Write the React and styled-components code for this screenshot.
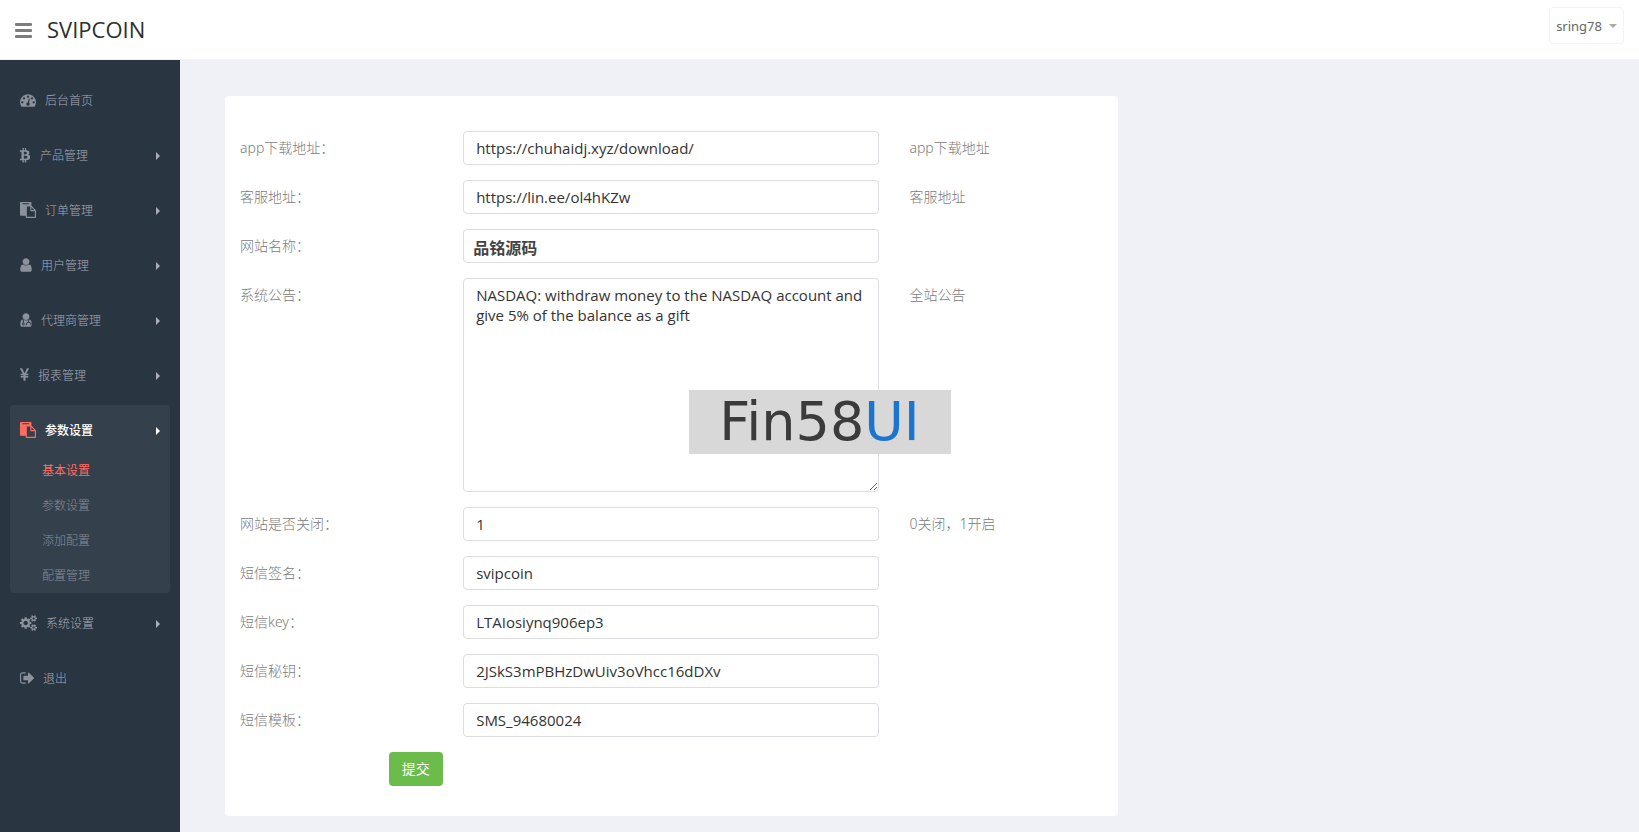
import React, { useState } from 'react'
import styled, { createGlobalStyle } from 'styled-components'

const colors = {
  page: '#eff1f7',
  sidebar: '#2a3542',
  sidebarActive: '#35404d',
  menuIcon: '#8b929c',
  menuText: '#a4aab4',
  subText: '#868d98',
  accent: '#ff6c60',
  label: '#7c7c7c',
  input: '#333',
  border: '#dcdde0',
  green: '#6cbc4b',
}

const GlobalStyle = createGlobalStyle`
  * {
    box-sizing: border-box;
  }

  body {
    margin: 0;
    background: ${colors.page};
    color: ${colors.label};
    font-family: "Noto Sans", "Noto Sans CJK SC", sans-serif;
    font-size: 14px;
    line-height: 20px;
  }

  button,
  input,
  textarea {
    font-family: inherit;
  }
`

const This = styled.div`
  display: flex;
  flex-direction: column;
  min-height: 100vh;
`

const Header = styled.header`
  display: flex;
  flex-direction: row;
  align-items: flex-start;
  justify-content: space-between;

  height: 60px;
  padding: 7px 15px;

  background: #fff;
  border-bottom: 1px solid #f1f2f7;
`

const Brand = styled.div`
  display: flex;
  flex-direction: row;
  align-items: center;
  gap: 15px;

  height: 46px;
`

const MenuButton = styled.button`
  display: flex;
  flex-direction: column;
  gap: 3px;

  width: 17px;
  padding: 0;

  background: none;
  border: 0;
  cursor: pointer;
`

const Bar = styled.span`
  width: 100%;
  height: 3px;

  background: #7d7d7d;
  border-radius: 1px;
`

const Title = styled.a`
  padding-bottom: 2px;

  color: #2e2e2e;
  font-family: "Open Sans", sans-serif;
  font-size: 22px;
  line-height: 30px;
  text-decoration: none;
`

const UserButton = styled.button`
  display: flex;
  flex-direction: row;
  align-items: center;
  gap: 7px;

  height: 37px;
  padding: 0 6px;

  background: #fff;
  border: 1px solid #f3f3f5;
  border-radius: 4px;
  color: #666;
  cursor: pointer;
  font-size: 13px;
`

const DownCaret = styled.span`
  border-top: 4px solid #aaa;
  border-left: 4px solid transparent;
  border-right: 4px solid transparent;
`

const Body = styled.div`
  flex-grow: 1;

  display: flex;
  flex-direction: row;
`

const Sidebar = styled.nav`
  flex-shrink: 0;

  width: 180px;
  padding: 15px 10px;

  background: ${colors.sidebar};
`

const Menu = styled.ul`
  display: flex;
  flex-direction: column;
  gap: 5px;

  margin: 0;
  padding: 0;

  list-style: none;
`

const MenuItem = styled.li`
  background: ${props => props.$active ? colors.sidebarActive : 'transparent'};
  border-radius: 4px;
`

const MenuLink = styled.a`
  display: flex;
  flex-direction: row;
  align-items: center;
  gap: 9px;

  height: ${props => props.$active ? '48px' : '50px'};
  padding: ${props => props.$active ? '4px' : '2px'} 10px 0;

  color: ${props => props.$active ? '#fff' : colors.menuText};
  font-size: 12px;
  font-weight: ${props => props.$active ? 500 : 300};
  text-decoration: none;

  svg {
    flex-shrink: 0;
    overflow: visible;
    color: ${props => props.$active ? colors.accent : colors.menuIcon};
  }
`

const RightCaret = styled.span`
  margin-left: auto;

  border-left: 4px solid ${props => props.$active ? '#fff' : '#a9aeb8'};
  border-top: 4px solid transparent;
  border-bottom: 4px solid transparent;
`

const SubMenu = styled.ul`
  margin: 0;
  padding: 0;

  list-style: none;
`

const SubLink = styled.a`
  display: block;

  padding-left: 32px;

  color: ${props => props.$active ? colors.accent : colors.subText};
  font-size: 12px;
  font-weight: ${props => props.$active ? 400 : 300};
  line-height: 35px;
  text-decoration: none;
`

const Main = styled.main`
  flex-grow: 1;

  padding: 36px 45px 16px 30px;
`

const Column = styled.div`
  width: calc(100% * 2 / 3);
  padding: 0 15px;
`

const Form = styled.form`
  display: flex;
  flex-direction: column;
  gap: 15px;

  padding: 35px 0 30px;

  background: #fff;
  border-radius: 4px;
`

const Row = styled.div`
  display: grid;
  grid-template-columns: 3fr 6fr 3fr;
`

const Cell = styled.div`
  display: flex;
  min-width: 0;
  padding: 0 15px;
`

const Label = styled.label`
  padding-top: 7px;

  font-weight: 300;
`

const Hint = styled.span`
  padding-top: 7px;

  font-weight: 300;
`

const Input = styled.input`
  width: 100%;
  height: 34px;
  padding: ${props => props.$strong ? '2px 9px 0' : '0 12px'};

  background: #fff;
  border: 1px solid ${colors.border};
  border-radius: 4px;
  color: ${props => props.$strong ? '#444' : colors.input};
  font-family: "Open Sans", "Noto Sans CJK SC", sans-serif;
  font-size: ${props => props.$strong ? '16px' : '15px'};
  font-weight: ${props => props.$strong ? 700 : 400};
  outline: none;
`

const TextArea = styled.textarea`
  width: 100%;
  height: 214px;
  padding: 6px 12px;

  background: #fff;
  border: 1px solid ${colors.border};
  border-radius: 4px;
  color: ${colors.input};
  font-family: "Open Sans", "Noto Sans CJK SC", sans-serif;
  font-size: 15px;
  line-height: 20px;
  outline: none;
  resize: vertical;
`

const Actions = styled.div`
  margin-left: calc(100% / 6);
  padding: 0 15px;
`

const Submit = styled.button`
  display: block;

  height: 34px;
  padding: 0 13px 2px;

  background: ${colors.green};
  border: 0;
  border-radius: 4px;
  color: #fff;
  cursor: pointer;
  font-size: 14px;
`

const Watermark = styled.div`
  position: fixed;
  top: calc(50% - 26px);
  left: calc(50% - 131px);

  display: flex;
  align-items: center;
  justify-content: center;
  width: 262px;
  height: 64px;

  background: #d8d8d8;
  color: #3b3b3b;
  font-family: "DejaVu Sans", sans-serif;
  font-size: 54px;
  line-height: 64px;
  pointer-events: none;

  span {
    color: #1b75cf;
  }
`

const cog = 'v140q0 16-149 31-12 27-30 52 51 113 51 138 0 4-4 7-122 71-124 71-8 0-46-47t-52-68q-20 2-30 2t-30-2q-14 21-52 68t-46 47q-2 0-124-71-4-3-4-7 0-25 51-138-18-25-30-52-149-15-149-31v-140q0-16 149-31 13-29 30-52-51-113-51-138 0-4 4-7 4-2 35-20t59-34 30-16q8 0 46 46.5t52 67.5q20-2 30-2t30 2q51-71 92-112l6-2q4 0 124 70 4 3 4 7 0 25-51 138 17 23 30 52 149 15 149 31z'

// every drawing sits on a 1792 grid: [left edge, top edge, width on the grid, width in px, path]
const icons = {
  dashboard: [0, 112, 1792, 16, 'M384 1152q0-53-37.5-90.5t-90.5-37.5-90.5 37.5-37.5 90.5 37.5 90.5 90.5 37.5 90.5-37.5 37.5-90.5zm192-448q0-53-37.5-90.5t-90.5-37.5-90.5 37.5-37.5 90.5 37.5 90.5 90.5 37.5 90.5-37.5 37.5-90.5zm428 481l101-382q6-26-7.5-48.5t-38.5-29.5-48 6.5-30 39.5l-101 382q-60 5-107 43.5t-63 98.5q-20 77 20 146t117 89 146-20 89-117q16-60-6-117t-72-91zm660-33q0-53-37.5-90.5t-90.5-37.5-90.5 37.5-37.5 90.5 37.5 90.5 90.5 37.5 90.5-37.5 37.5-90.5zm-640-640q0-53-37.5-90.5t-90.5-37.5-90.5 37.5-37.5 90.5 37.5 90.5 90.5 37.5 90.5-37.5 37.5-90.5zm448 192q0-53-37.5-90.5t-90.5-37.5-90.5 37.5-37.5 90.5 37.5 90.5 90.5 37.5 90.5-37.5 37.5-90.5zm320 448q0 261-141 483-19 29-54 29h-1402q-35 0-54-29-141-221-141-483 0-182 71-348t191-286 286-191 348-71 348 71 286 191 191 286 71 348z'],
  bitcoin: [128, 224, 1280, 11, 'M1217 713q18 182-131 258 117 28 175 103t45 214q-7 71-32.5 125t-64.5 89-97 58.5-121.5 34.5-145.5 15v255h-154v-251q-80 0-122-1v252h-154v-255q-18 0-54-.5t-55-.5h-200l31-183h111q50 0 58-51v-402h16q-6-1-16-1v-287q-13-68-89-68h-111v-164l212 1q64 0 97-1v-252h154v247q82-2 122-2v-245h154v252q79 7 140 22.5t113 45 82.5 78 36.5 114.5zm-215 545q0-36-15-64t-37-46-57.5-30.5-65.5-18.5-74-9-69-3-64.5 1-47.5 1v338q8 0 37 .5t48 .5 53-1.5 58.5-4 57-8.5 55.5-14 47.5-21 39.5-30 24.5-40 9.5-51zm-71-476q0-33-12.5-58.5t-30.5-42-48-28-55-16.5-61.5-8-58-2.5-54 1-39.5.5v307q5 0 34.5.5t46.5 0 50-2 55-5.5 51.5-11 48.5-18.5 37-27 27-38.5 9-51z'],
  paste: [0, 112, 1792, 16, 'M768 1664h896v-640h-416q-40 0-68-28t-28-68v-416h-384v1152zm256-1440v-64q0-13-9.5-22.5t-22.5-9.5h-704q-13 0-22.5 9.5t-9.5 22.5v64q0 13 9.5 22.5t22.5 9.5h704q13 0 22.5-9.5t9.5-22.5zm256 672h299l-299-299v299zm512 128v672q0 40-28 68t-68 28h-960q-40 0-68-28t-28-68v-160h-544q-40 0-68-28t-28-68v-1344q0-40 28-68t68-28h1088q40 0 68 28t28 68v328q21 13 36 28l408 408q28 28 48 76t20 88z'],
  user: [256, 112, 1280, 12, 'M1536 1399q0 109-62.5 187t-150.5 78h-854q-88 0-150.5-78t-62.5-187q0-85 8.5-160.5t31.5-152 58.5-131 94-89 134.5-34.5q131 128 313 128t313-128q76 0 134.5 34.5t94 89 58.5 131 31.5 152 8.5 160.5zm-256-887q0 159-112.5 271.5t-271.5 112.5-271.5-112.5-112.5-271.5 112.5-271.5 271.5-112.5 271.5 112.5 112.5 271.5z'],
  yen: [384, 112, 1027, 9, 'M985.5 1536h-172q-13 0-22.5-9t-9.5-23v-330h-288q-13 0-22.5-9t-9.5-23v-103q0-13 9.5-22.5t22.5-9.5h288v-85h-288q-13 0-22.5-9t-9.5-23v-104q0-13 9.5-22.5t22.5-9.5h214l-321-578q-8-16 0-32 10-16 28-16h194q19 0 29 18l215 425q19 38 56 125 10-24 30.5-68t27.5-61l191-420q8-19 29-19h191q17 0 27 16 9 14 1 31l-313 579h215q13 0 22.5 9.5t9.5 22.5v104q0 14-9.5 23t-22.5 9h-290v85h290q13 0 22.5 9.5t9.5 22.5v103q0 14-9.5 23t-22.5 9h-290v330q0 13-9.5 22.5t-22.5 9.5z'],
  cogs: [0, 112, 1920, 17, `M896 896q0-106-75-181t-181-75-181 75-75 181 75 181 181 75 181-75 75-181zm768 512q0-52-38-90t-90-38-90 38-38 90q0 53 37.5 90.5t90.5 37.5 90.5-37.5 37.5-90.5zm0-1024q0-52-38-90t-90-38-90 38-38 90q0 53 37.5 90.5t90.5 37.5 90.5-37.5 37.5-90.5zm-384 421v185q0 10-7 19.5t-16 10.5l-155 24q-11 35-32 76 34 48 90 115 7 11 7 20 0 12-7 19-23 30-82.5 89.5t-78.5 59.5q-11 0-21-7l-115-90q-37 19-77 31-11 108-23 155-7 24-30 24h-186q-11 0-20-7.5t-10-17.5l-23-153q-34-10-75-31l-118 89q-7 7-20 7-11 0-21-8-144-133-144-160 0-9 7-19 10-14 41-53t47-61q-23-44-35-82l-152-24q-10-1-17-9.5t-7-19.5v-185q0-10 7-19.5t16-10.5l155-24q11-35 32-76-34-48-90-115-7-11-7-20 0-12 7-20 22-30 82-89t79-59q11 0 21 7l115 90q34-18 77-32 11-108 23-154 7-24 30-24h186q11 0 20 7.5t10 17.5l23 153q34 10 75 31l118-89q8-7 20-7 11 0 21 8 144 133 144 160 0 8-7 19-12 16-42 54t-45 60q23 48 34 82l152 23q10 2 17 10.5t7 19.5zM1920 1338${cog}M1920 314${cog}`],
  signOut: [64, 112, 1568, 14, 'M704 1440q0 4 1 20t.5 26.5-3 23.5-10 19.5-20.5 6.5h-320q-119 0-203.5-84.5t-84.5-203.5v-704q0-119 84.5-203.5t203.5-84.5h320q13 0 22.5 9.5t9.5 22.5q0 4 1 20t.5 26.5-3 23.5-10 19.5-20.5 6.5h-320q-66 0-113 47t-47 113v704q0 66 47 113t113 47h312l11.5 1 11.5 3 8 5.5 7 9 2 13.5zm928-544q0 26-19 45l-544 544q-19 19-45 19t-45-19-19-45v-288h-448q-26 0-45-19t-19-45v-384q0-26 19-45t45-19h448v-288q0-26 19-45t45-19 45 19l544 544q19 19 19 45z'],
}

const Icon = ({ name }) => {
  const isDoctor = name === 'doctor'
  const [left, top, gridWidth, width, path] = icons[isDoctor ? 'user' : name]

  return (
    <svg
      width={width}
      height="16"
      viewBox={`${left} ${top} ${gridWidth} 1792`}
      fill="currentColor"
      fillRule="evenodd"
      aria-hidden="true"
    >
      <path d={path} />
      {isDoctor
        && <g fill="none" stroke={colors.sidebar} strokeWidth="110">
          <path d="M600 880v340M1190 880v280M940 1480v-160q0-160 250-160t250 160v160" />
          <circle cx="600" cy="1350" r="110" />
        </g>
      }
    </svg>
  )
}

const menu = [
  { icon: 'dashboard', text: '后台首页' },
  { icon: 'bitcoin', text: '产品管理', hasChildren: true },
  { icon: 'paste', text: '订单管理', hasChildren: true },
  { icon: 'user', text: '用户管理', hasChildren: true },
  { icon: 'doctor', text: '代理商管理', hasChildren: true },
  { icon: 'yen', text: '报表管理', hasChildren: true },
  {
    icon: 'paste',
    text: '参数设置',
    hasChildren: true,
    active: true,
    items: ['基本设置', '参数设置', '添加配置', '配置管理'],
  },
  { icon: 'cogs', text: '系统设置', hasChildren: true },
  { icon: 'signOut', text: '退出' },
]

const fields = [
  { name: 'download', label: 'app下载地址：', value: 'https://chuhaidj.xyz/download/', hint: 'app下载地址' },
  { name: 'service', label: '客服地址：', value: 'https://lin.ee/ol4hKZw', hint: '客服地址' },
  { name: 'siteName', label: '网站名称：', value: '品铭源码', strong: true },
  {
    name: 'notice',
    label: '系统公告：',
    value: 'NASDAQ: withdraw money to the NASDAQ account and give 5% of the balance as a gift',
    hint: '全站公告',
    multiline: true,
  },
  { name: 'isOpen', label: '网站是否关闭：', value: '1', hint: '0关闭，1开启' },
  { name: 'smsSign', label: '短信签名：', value: 'svipcoin' },
  { name: 'smsKey', label: '短信key：', value: 'LTAIosiynq906ep3' },
  { name: 'smsSecret', label: '短信秘钥：', value: '2JSkS3mPBHzDwUiv3oVhcc16dDXv' },
  { name: 'smsTemplate', label: '短信模板：', value: 'SMS_94680024' },
]

const Field = ({ field, value, onChange }) => (
  <Row>
    <Cell>
      <Label htmlFor={field.name}>{field.label}</Label>
    </Cell>
    <Cell>
      {field.multiline
        ? <TextArea id={field.name} value={value} onChange={onChange} spellCheck={false} />
        : <Input id={field.name} type="text" value={value} onChange={onChange} $strong={field.strong} />
      }
    </Cell>
    <Cell>
      {field.hint && <Hint>{field.hint}</Hint>}
    </Cell>
  </Row>
)

const App = () => {
  const [values, setValues] = useState(
    Object.fromEntries(fields.map(field => [field.name, field.value]))
  )
  const [isSidebarOpen, setIsSidebarOpen] = useState(true)

  const updateValue = (name, value) => {
    setValues({ ...values, [name]: value })
  }

  return (
    <This>
      <GlobalStyle />

      <Header>
        <Brand>
          <MenuButton
            type="button"
            aria-label="menu"
            onClick={() => setIsSidebarOpen(!isSidebarOpen)}
          >
            <Bar />
            <Bar />
            <Bar />
          </MenuButton>
          <Title href="#">SVIPCOIN</Title>
        </Brand>
        <UserButton type="button">
          sring78
          <DownCaret />
        </UserButton>
      </Header>

      <Body>
        {isSidebarOpen
          && <Sidebar>
            <Menu>
              {menu.map(item => (
                <MenuItem key={item.text} $active={item.active}>
                  <MenuLink href="#" $active={item.active}>
                    <Icon name={item.icon} />
                    {item.text}
                    {item.hasChildren && <RightCaret $active={item.active} />}
                  </MenuLink>
                  {item.items
                    && <SubMenu>
                      {item.items.map((text, index) => (
                        <li key={text}>
                          <SubLink href="#" $active={index === 0}>{text}</SubLink>
                        </li>
                      ))}
                    </SubMenu>
                  }
                </MenuItem>
              ))}
            </Menu>
          </Sidebar>
        }

        <Main>
          <Column>
            <Form onSubmit={e => e.preventDefault()}>
              {fields.map(field => (
                <Field
                  key={field.name}
                  field={field}
                  value={values[field.name]}
                  onChange={e => updateValue(field.name, e.target.value)}
                />
              ))}
              <Actions>
                <Submit type="submit">提交</Submit>
              </Actions>
            </Form>
          </Column>
        </Main>
      </Body>

      <Watermark>Fin58<span>UI</span></Watermark>
    </This>
  )
}

export default App
